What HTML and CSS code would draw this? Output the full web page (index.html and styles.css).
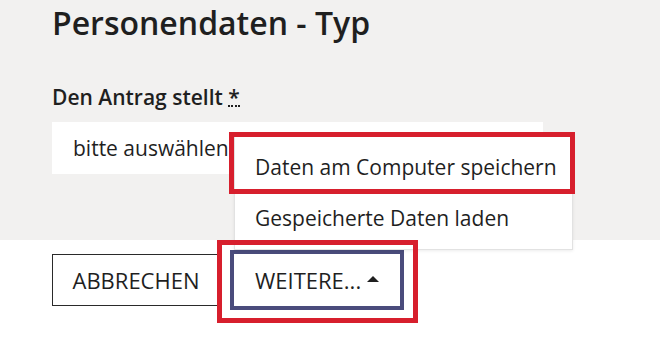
FILE: index.html
```html
<!DOCTYPE html>
<html lang="de">
<head>
<meta charset="utf-8">
<title>Personendaten - Typ</title>
<link rel="stylesheet" href="styles.css">
</head>
<body>
<div class="panel">
  <h1 class="title">Personendaten - Typ</h1>
  <label class="label">Den Antrag stellt <abbr class="req" title="Pflichtfeld">*</abbr></label>
  <div class="select">bitte auswählen</div>
</div>
<div class="actions">
  <button class="btn">ABBRECHEN</button>
  <div class="more-wrap">
    <button class="btn btn-more">WEITERE... <span class="caret"></span></button>
    <ul class="menu">
      <li class="item item-focus">Daten am Computer speichern<span class="mark mark-item"></span></li>
      <li class="item">Gespeicherte Daten laden</li>
    </ul>
    <span class="mark mark-btn"></span>
  </div>
</div>
</body>
</html>
```

FILE: styles.css
```css
html, body {
  margin: 0;
  padding: 0;
  background: #ffffff;
  font-family: "Open Sans", Lato, sans-serif;
  color: #1f1f1f;
}
body {
  min-height: 358px;
}
.panel {
  background: #f2f1f0;
  height: 240px;
  box-sizing: border-box;
  padding: 5px 52px 0 52px;
  display: flex;
  flex-direction: column;
}
.title {
  margin: 0;
  font-size: 32px;
  line-height: 36px;
  font-weight: 600;
}
.label {
  margin-top: 44px;
  font-size: 21px;
  line-height: 24px;
  font-weight: 600;
}
.req {
  text-decoration: none;
  border-bottom: 2px dotted #1f1f1f;
  line-height: 16px;
  display: inline-block;
}
.select {
  margin-top: 13px;
  width: 491px;
  height: 52px;
  box-sizing: border-box;
  background: #ffffff;
  padding-left: 21px;
  font-size: 21px;
  line-height: 52px;
  padding-top: 0;
  overflow: hidden;
  white-space: nowrap;
}
.actions {
  display: flex;
  align-items: center;
  padding: 10px 52px 0 52px;
  gap: 10px;
}
.btn {
  font-family: "Open Sans", Lato, sans-serif;
  font-size: 22px;
  color: #1f1f1f;
  background: #ffffff;
  border: 1px solid #2a2a2a;
  height: 52px;
  padding: 0;
  width: 168px;
  box-sizing: border-box;
  white-space: nowrap;
}
.more-wrap {
  position: relative;
}
.btn-more {
  border: 4px solid #4a4c7c;
  height: 60px;
  width: 174px;
  display: flex;
  align-items: center;
  justify-content: flex-start;
  padding-left: 21px;
}
.caret {
  display: inline-block;
  width: 0;
  height: 0;
  border-left: 6px solid transparent;
  border-right: 6px solid transparent;
  border-bottom: 6px solid #1f1f1f;
  margin-left: 6px;
  margin-bottom: 2px;
}
.menu {
  position: absolute;
  left: 4px;
  bottom: 100%;
  width: 339px;
  margin: 0;
  padding: 6px 0 5px 0;
  list-style: none;
  background: #ffffff;
  border: 1px solid #e2e2e2;
  box-sizing: border-box;
  box-shadow: 0 1px 3px rgba(0,0,0,0.08);
}
.item {
  position: relative;
  height: 51px;
  line-height: 51px;
  padding-left: 20px;
  font-size: 21px;
  white-space: nowrap;
}
.mark {
  position: absolute;
  border: 5px solid #d71f2d;
  box-sizing: border-box;
  pointer-events: none;
}
.mark-item {
  left: -6px;
  top: -10px;
  width: 346px;
  height: 62px;
}
.mark-btn {
  left: -13px;
  top: -10px;
  width: 201px;
  height: 83px;
}
```
